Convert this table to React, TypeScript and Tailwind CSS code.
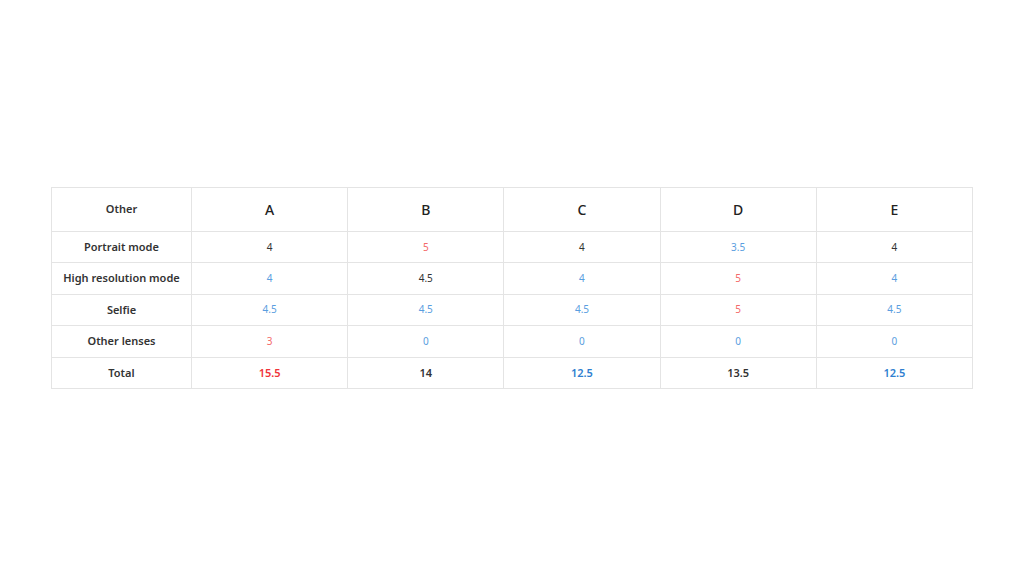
import React from "react";

type Cell = { v: string; c: "k" | "r" | "b" };
const rows: { label: string; cells: Cell[]; total?: boolean }[] = [
  { label: "Portrait mode", cells: [{ v: "4", c: "k" }, { v: "5", c: "r" }, { v: "4", c: "k" }, { v: "3.5", c: "b" }, { v: "4", c: "k" }] },
  { label: "High resolution mode", cells: [{ v: "4", c: "b" }, { v: "4.5", c: "k" }, { v: "4", c: "b" }, { v: "5", c: "r" }, { v: "4", c: "b" }] },
  { label: "Selfie", cells: [{ v: "4.5", c: "b" }, { v: "4.5", c: "b" }, { v: "4.5", c: "b" }, { v: "5", c: "r" }, { v: "4.5", c: "b" }] },
  { label: "Other lenses", cells: [{ v: "3", c: "r" }, { v: "0", c: "b" }, { v: "0", c: "b" }, { v: "0", c: "b" }, { v: "0", c: "b" }] },
  { label: "Total", total: true, cells: [{ v: "15.5", c: "r" }, { v: "14", c: "k" }, { v: "12.5", c: "b" }, { v: "13.5", c: "k" }, { v: "12.5", c: "b" }] },
];

const color = (c: Cell["c"], total?: boolean) => {
  if (c === "r") return total ? "text-[#f0343a]" : "text-[#f46a6a]";
  if (c === "b") return total ? "text-[#2f7fd0]" : "text-[#5a9ee0]";
  return "text-[#333333]";
};

export default function App() {
  return (
    <div className="w-[1024px] h-[576px] bg-white pt-[187px] pl-[51px]" style={{ fontFamily: '"Noto Sans", "Open Sans", sans-serif' }}>
      <table className="border-collapse w-[922px] table-fixed">
        <colgroup>
          <col className="w-[140px]" />
          <col />
          <col />
          <col />
          <col />
          <col />
        </colgroup>
        <thead>
          <tr className="h-[44px]">
            <th className="border border-[#e4e4e4] text-[11px] font-semibold text-[#333]">Other</th>
            {["A", "B", "C", "D", "E"].map((h) => (
              <th key={h} className="border border-[#e4e4e4] text-[14px] font-medium text-[#222]">{h}</th>
            ))}
          </tr>
        </thead>
        <tbody>
          {rows.map((r) => (
            <tr key={r.label} className="h-[31.4px]">
              <td className="border border-[#e4e4e4] text-center text-[11px] font-semibold text-[#333]">{r.label}</td>
              {r.cells.map((c, i) => (
                <td key={i} className={`border border-[#e4e4e4] text-center ${r.total ? "text-[11px] font-semibold" : "text-[10px] font-normal"} ${color(c.c, r.total)}`}>{c.v}</td>
              ))}
            </tr>
          ))}
        </tbody>
      </table>
    </div>
  );
}
